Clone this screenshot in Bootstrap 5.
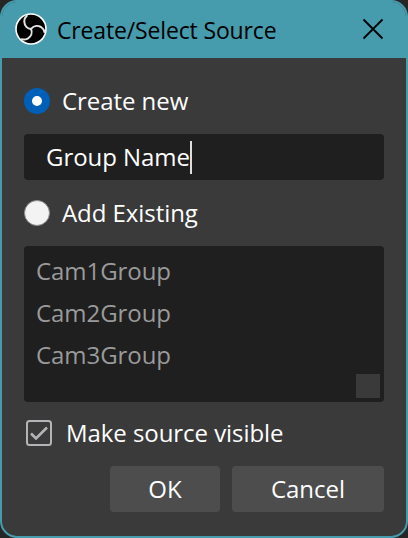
<!DOCTYPE html>
<html lang="en">
<head>
<meta charset="utf-8">
<meta name="viewport" content="width=device-width, initial-scale=1">
<title>Create/Select Source</title>
<link href="https://cdn.jsdelivr.net/npm/bootstrap@5.3.0/dist/css/bootstrap.min.css" rel="stylesheet">
<style>
  body { background: #262626; font-family: "Open Sans", "Noto Sans", sans-serif; font-size: 24px; line-height: 34px; letter-spacing: -.06px; color: #fff; }
  .dialog-window { background: #3a3a3a; border: 2px solid #469bad; border-radius: 17px; }
  .title-strip { background: #469bad; height: 56px; color: #000; padding: 0 22px 2px 13px; }
  .title-text { font-size: 23px; letter-spacing: -.15px; margin-left: 10px; padding-top: 2px; white-space: nowrap; }
  .dialog-content { padding: 26px 22px 24px; }
  .option-row { height: 34px; }
  .radio-dot { width: 26px; height: 26px; border-radius: 50%; margin-right: 12px; }
  .radio-on { background: #fff; border: 8px solid #005fb8; }
  .radio-off { background: #f3f3f3; border: 1px solid #8a8a8a; }
  .name-input { background: #1f1f1f; border-radius: 4px; height: 46px; margin-top: 16px; margin-bottom: 16px; padding-left: 22px; }
  .caret { width: 2px; height: 33px; background: #dedede; }
  .source-list { background: #1f1f1f; border-radius: 4px; height: 156px; margin: 16px 0 14px; padding: 4px 12px; color: #9a9a9a; }
  .source-item { height: 42px; line-height: 42px; }
  .scroll-corner { width: 24px; height: 24px; right: 4px; bottom: 4px; background: #3a3a3a; }
  .check-icon { margin: 0 14px 0 2px; }
  .dialog-btn { background: #4d4d4d; color: #fff; border: 0; border-radius: 4px; height: 46px; padding: 0; font-size: 24px; line-height: 46px; }
  .btn-ok { width: 110px; }
  .btn-cancel { width: 152px; }
</style>
</head>
<body class="overflow-hidden">
<main class="dialog-window vh-100 d-flex flex-column overflow-hidden">
  <header class="title-strip d-flex align-items-center flex-shrink-0">
    <svg width="32" height="32" viewBox="-16 -16 32 32" class="flex-shrink-0">
      <circle r="15" fill="#000" stroke="#fff" stroke-width="1.6"/>
      <g fill="none" stroke="#e4e4e4" stroke-width="2" stroke-linecap="round">
        <path id="arm" d="M0 0C2-3 6-4 10-2Q13 0 13.5 3"/>
        <use href="#arm" transform="rotate(120)"/>
        <use href="#arm" transform="rotate(240)"/>
      </g>
    </svg>
    <span class="title-text">Create/Select Source</span>
    <svg class="ms-auto" width="22" height="22" viewBox="0 0 22 22" stroke="#000" stroke-width="1.8" aria-label="Close"><path d="M1.5 1.5l19 19M20.5 1.5l-19 19"/></svg>
  </header>
  <section class="dialog-content flex-grow-1">
    <div class="option-row d-flex align-items-center"><span class="radio-dot radio-on"></span><span>Create new</span></div>
    <div class="name-input d-flex align-items-center"><span>Group Name</span><span class="caret"></span></div>
    <div class="option-row d-flex align-items-center"><span class="radio-dot radio-off"></span><span>Add Existing</span></div>
    <div class="source-list position-relative">
      <div class="source-item">Cam1Group</div>
      <div class="source-item">Cam2Group</div>
      <div class="source-item">Cam3Group</div>
      <span class="scroll-corner position-absolute"></span>
    </div>
    <div class="option-row d-flex align-items-center">
      <svg class="check-icon" width="26" height="26" viewBox="0 0 26 26" fill="none" stroke="#b4b4b8"><rect x="1" y="1" width="24" height="24" rx="2.5" stroke-width="2"/><path d="M5 13.5l5 5L21 7.5" stroke-width="2.6"/></svg>
      <span>Make source visible</span>
    </div>
    <div class="d-flex justify-content-end mt-3" style="gap:12px">
      <button class="btn dialog-btn btn-ok">OK</button>
      <button class="btn dialog-btn btn-cancel">Cancel</button>
    </div>
  </section>
</main>
<script src="https://cdn.jsdelivr.net/npm/bootstrap@5.3.0/dist/js/bootstrap.bundle.min.js"></script>
</body>
</html>
